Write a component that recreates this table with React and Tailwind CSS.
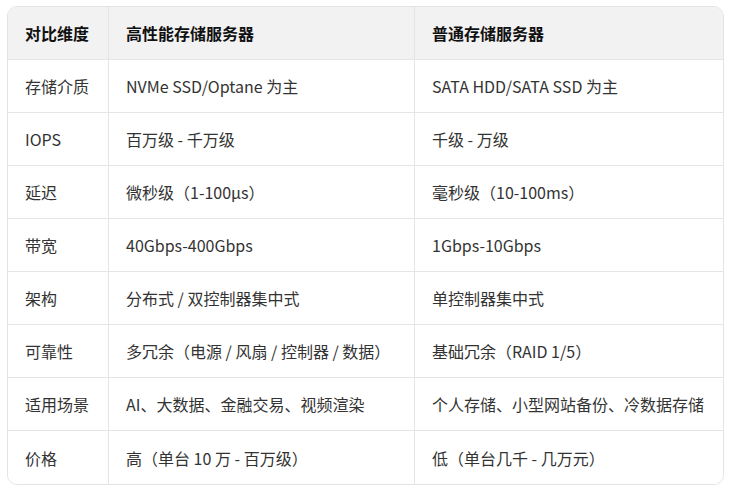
import React from "react";

const HEAD = ["对比维度", "高性能存储服务器", "普通存储服务器"];

const ROWS = [
  ["存储介质", "NVMe SSD/Optane 为主", "SATA HDD/SATA SSD 为主"],
  ["IOPS", "百万级 - 千万级", "千级 - 万级"],
  ["延迟", "微秒级（1-100μs）", "毫秒级（10-100ms）"],
  ["带宽", "40Gbps-400Gbps", "1Gbps-10Gbps"],
  ["架构", "分布式 / 双控制器集中式", "单控制器集中式"],
  ["可靠性", "多冗余（电源 / 风扇 / 控制器 / 数据）", "基础冗余（RAID 1/5）"],
  ["适用场景", "AI、大数据、金融交易、视频渲染", "个人存储、小型网站备份、冷数据存储"],
  ["价格", "高（单台 10 万 - 百万级）", "低（单台几千 - 几万元）"],
];

function Row({ cells, head, last }) {
  return (
    <div
      className={`grid grid-cols-[101px_306px_308px] h-[53px] ${last ? "" : "border-b border-[#e5e5e5]"} ${head ? "bg-[#f2f2f2]" : "bg-white"}`}
    >
      {cells.map((c, i) => (
        <div
          key={i}
          className={`flex items-center pl-[17px] whitespace-nowrap ${i < 2 ? "border-r border-[#e5e5e5]" : ""} ${head ? "font-bold text-[#111]" : "text-[#333]"}`}
        >
          {c}
        </div>
      ))}
    </div>
  );
}

export default function App() {
  return (
    <div className="w-[731px] h-[492px] bg-white pt-[6px] pl-[7px] font-['Noto_Sans_CJK_SC',sans-serif] text-[16px]">
      <div className="w-[717px] border border-[#e3e3e3] rounded-[10px] overflow-hidden">
        <Row cells={HEAD} head />
        {ROWS.map((r, i) => (
          <Row key={i} cells={r} last={i === ROWS.length - 1} />
        ))}
      </div>
    </div>
  );
}
